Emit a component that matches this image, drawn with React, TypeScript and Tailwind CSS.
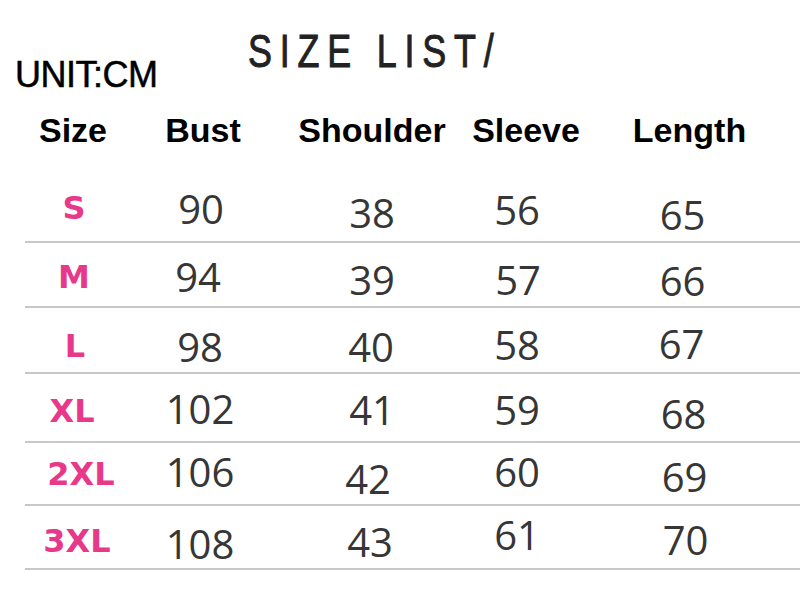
import React from "react";

type Row = {
  size: string;
  sizeCls: string;
  rowCls: string;
  cells: { v: string; cls: string }[];
};

const rows: Row[] = [
  {
    size: "S",
    sizeCls: "pt-[16px] translate-x-[-2px]",
    rowCls: "h-[67px]",
    cells: [
      { v: "90", cls: "pt-[13px] translate-x-[1px]" },
      { v: "38", cls: "pt-[17px] translate-x-[1px]" },
      { v: "56", cls: "pt-[14px]" },
      { v: "65", cls: "pt-[19px]" },
    ],
  },
  {
    size: "M",
    sizeCls: "pt-[18px] translate-x-[-2px]",
    rowCls: "h-[65px]",
    cells: [
      { v: "94", cls: "pt-[14px] translate-x-[-2px]" },
      { v: "39", cls: "pt-[17px] translate-x-[1px]" },
      { v: "57", cls: "pt-[17px] translate-x-[1px]" },
      { v: "66", cls: "pt-[18px]" },
    ],
  },
  {
    size: "L",
    sizeCls: "pt-[22px] translate-x-[-1px]",
    rowCls: "h-[66px]",
    cells: [
      { v: "98", cls: "pt-[19px]" },
      { v: "40", cls: "pt-[19px]" },
      { v: "58", cls: "pt-[17px]" },
      { v: "67", cls: "pt-[16px] translate-x-[-1px]" },
    ],
  },
  {
    size: "XL",
    sizeCls: "pt-[21px] translate-x-[-4px]",
    rowCls: "h-[69px]",
    cells: [
      { v: "102", cls: "pt-[15px]" },
      { v: "41", cls: "pt-[16px] translate-x-[1px]" },
      { v: "59", cls: "pt-[16px]" },
      { v: "68", cls: "pt-[20px] translate-x-[1px]" },
    ],
  },
  {
    size: "2XL",
    sizeCls: "pt-[15px] translate-x-[5px]",
    rowCls: "h-[63px]",
    cells: [
      { v: "106", cls: "pt-[9px]" },
      { v: "42", cls: "pt-[16px] translate-x-[-3px]" },
      { v: "60", cls: "pt-[9px]" },
      { v: "69", cls: "pt-[14px] translate-x-[2px]" },
    ],
  },
  {
    size: "3XL",
    sizeCls: "pt-[19px] translate-x-[1px]",
    rowCls: "h-[64px]",
    cells: [
      { v: "108", cls: "pt-[18px]" },
      { v: "43", cls: "pt-[16px] translate-x-[-1px]" },
      { v: "61", cls: "pt-[9px]" },
      { v: "70", cls: "pt-[14px] translate-x-[3px] text-[#1a1a1a]" },
    ],
  },
];

const grid = "grid grid-cols-[102px_146px_196px_96px_1fr]";

export default function App() {
  return (
    <div className="w-[800px] h-[590px] bg-white overflow-hidden relative">
      {/* Title */}
      <div className="h-[28px]" />
      <div className="h-[46px] pl-[248px]">
        <span className="inline-block origin-left scale-x-[0.78] text-[46px] leading-[46px] tracking-[10px] text-[#222222] [-webkit-text-stroke:1px_#222222] [font-family:'Liberation_Sans',Arial,sans-serif] whitespace-nowrap">
          SIZE LIST/
        </span>
      </div>
      {/* Unit */}
      <div className="mt-[-17px] h-[36px] pl-[15px]">
        <span className="text-[36px] leading-[36px] text-black tracking-[-0.5px] [-webkit-text-stroke:0.5px_black] [font-family:'Liberation_Sans',Arial,sans-serif]">
          UNIT:CM
        </span>
      </div>
      {/* Header */}
      <div className={`${grid} mt-[20px] h-[34px] ml-[25px] [font-family:'Liberation_Sans',Arial,sans-serif] text-[34px] leading-[34px] font-bold text-black`}>
        <div className="flex justify-center translate-x-[-3px]">Size</div>
        <div className="flex justify-center translate-x-[3px]">Bust</div>
        <div className="flex justify-center translate-x-[1px]">Shoulder</div>
        <div className="flex justify-center translate-x-[9px]">Sleeve</div>
        <div className="flex justify-center translate-x-[7px]">Length</div>
      </div>
      {/* Rows */}
      <div className="mt-[29px] ml-[25px]">
        {rows.map((r) => (
          <div key={r.size} className={`${grid} ${r.rowCls} border-b-2 border-[#c8c8c8]`}>
            <div className={`flex justify-center items-start ${r.sizeCls}`}>
              <span className="text-[32px] leading-[32px] font-bold text-[#e8388a] [font-family:'DejaVu_Sans',Verdana,sans-serif]">
                {r.size}
              </span>
            </div>
            {r.cells.map((c, i) => (
              <div key={i} className={`flex justify-center items-start ${c.cls}`}>
                <span className="text-[40px] leading-[40px] text-[#363636] [font-family:'Open_Sans',sans-serif]">
                  {c.v}
                </span>
              </div>
            ))}
          </div>
        ))}
      </div>
    </div>
  );
}
